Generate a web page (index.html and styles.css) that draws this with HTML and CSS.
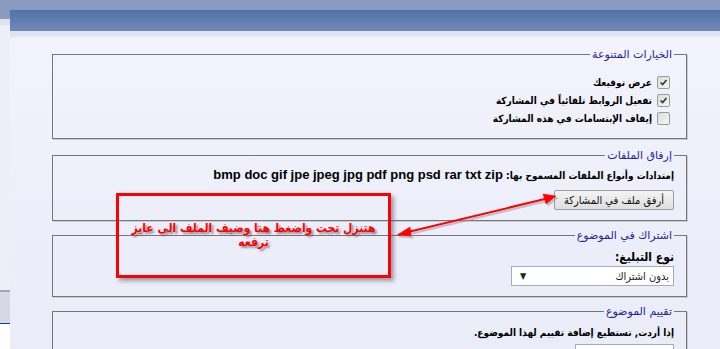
FILE: index.html
```html
<!DOCTYPE html>
<html lang="ar">
<head>
    <meta charset="UTF-8">
    <title>إرفاق الملفات</title>
    <link rel="stylesheet" href="styles.css">
</head>
<body>
    <div class="topbar"></div>
    <div class="frame">
        <div class="side">
            <div class="side-top"></div>
            <div class="side-band"></div>
            <div class="side-space"></div>
            <div class="side-block"></div>
        </div>
        <div class="main">
            <div class="header"></div>
            <div class="header-band"></div>
            <form class="options" dir="rtl">
                <fieldset class="box box-misc">
                    <legend>الخيارات المتنوعة</legend>
                    <label class="check-row"><span class="check on"><svg viewBox="0 0 13 13"><path d="M3 6.5 L5.5 9 L10 3.5" /></svg></span>عرض توقيعك</label>
                    <label class="check-row"><span class="check on"><svg viewBox="0 0 13 13"><path d="M3 6.5 L5.5 9 L10 3.5" /></svg></span>تفعيل الروابط تلقائياً في المشاركة</label>
                    <label class="check-row"><span class="check"></span>إيقاف الإبتسامات في هذه المشاركة</label>
                </fieldset>

                <fieldset class="box box-files">
                    <legend>إرفاق الملفات</legend>
                    <div class="file-types">إمتدادات وأنواع الملفات المسموح بها: <span class="ext">bmp doc gif jpe jpeg jpg pdf png psd rar txt zip</span></div>
                    <button type="button" class="attach-btn">أرفق ملف في المشاركة</button>
                </fieldset>

                <fieldset class="box box-sub">
                    <legend>اشتراك في الموضوع</legend>
                    <div class="field-label">نوع التبليغ:</div>
                    <div class="select wide"><span>بدون اشتراك</span><span class="arrow">&#9660;</span></div>
                </fieldset>

                <fieldset class="box box-rate">
                    <legend>تقييم الموضوع</legend>
                    <div class="rate-text">إذا أردت, تستطيع إضافة تقييم لهذا الموضوع.</div>
                    <div class="select narrow"><span>اختر التقييم</span></div>
                </fieldset>
            </form>
        </div>
    </div>

    <div class="note" dir="rtl">
        <p>هتنزل تحت واضغط هنا وضيف الملف الى عايز<br>ترفعه</p>
    </div>

    <svg class="pointer" width="170" height="60" viewBox="0 0 170 60">
        <g transform="translate(2 2)" fill="#9a9aa6" stroke="#9a9aa6" opacity="0.55">
            <line x1="10" y1="43" x2="155" y2="8" stroke-width="2" />
            <polygon points="3,45 16,37 17,46" />
            <polygon points="162,6 149,4 152,14" />
        </g>
        <g fill="#ff0000" stroke="#ff0000">
            <line x1="10" y1="43" x2="155" y2="8" stroke-width="2" />
            <polygon points="3,45 16,37 17,46" stroke-width="0.5" />
            <polygon points="162,6 149,4 152,14" stroke-width="0.5" />
        </g>
    </svg>
</body>
</html>
```

FILE: styles.css
```css
body, html {
    margin: 0;
    padding: 0;
    height: 100%;
    overflow: hidden;
}
body {
    background-color: #eff0fa;
    font-family: "DejaVu Sans Condensed", "DejaVu Sans", sans-serif;
    position: relative;
}
.topbar {
    height: 10px;
    background-color: #8a9bc2;
}
.frame {
    display: flex;
    height: 339px;
}
.side {
    width: 10px;
    display: flex;
    flex-direction: column;
    background-color: #ffffff;
}
.side-top {
    height: 9px;
    background-color: #8a9bc2;
}
.side-band {
    height: 6px;
    background-color: #dde2ee;
}
.side-space {
    height: 265px;
    background-color: #eceef8;
}
.side-block {
    height: 31px;
    border-top: 2px solid #a4a7b2;
    border-bottom: 1px solid #1d3596;
    background-color: #d6d9e3;
}
.main {
    flex-grow: 1;
    background: linear-gradient(#f3f4fc, #eceef9 60%, #eaecf8);
}
.header {
    height: 21px;
    background: linear-gradient(#5272a8, #7189b9);
}
.header-band {
    height: 5px;
    background-color: #dee3ef;
    border-bottom: 2px solid #eaecf3;
}
.options {
    padding: 10px 33px 0 42px;
}
.box {
    margin: 0 0 8px 0;
    border: 1px solid #767676;
    box-shadow: 1px 1px 0 #c9cad2;
    padding: 10px 12px 12px 12px;
    min-width: 0;
}
.box legend {
    color: #24249c;
    font-family: "DejaVu Sans", sans-serif;
    font-size: 11px;
    line-height: 13px;
    padding: 0 2px;
}
.box-misc {
    padding-top: 12px;
    padding-bottom: 11px;
    margin-bottom: 10px;
}
.check-row {
    display: flex;
    align-items: center;
    height: 18px;
    font-size: 10px;
    font-weight: bold;
    color: #000000;
}
.check {
    width: 11px;
    height: 11px;
    border: 1px solid #9c9c9c;
    border-radius: 2px;
    background: linear-gradient(135deg, #dcdcdc, #f6f6f6);
    margin: 0 4px 0 5px;
    display: flex;
}
.check svg {
    width: 11px;
    height: 11px;
}
.check path {
    fill: none;
    stroke: #3a3a3a;
    stroke-width: 2;
}
.box-files {
    padding-top: 5px;
    padding-bottom: 10px;
}
.file-types {
    font-size: 10px;
    font-weight: bold;
    line-height: 16px;
    color: #000000;
}
.ext {
    font-family: "Liberation Sans", Arial, sans-serif;
    font-size: 13px;
}
.attach-btn {
    display: block;
    margin-top: 6px;
    width: 120px;
    height: 20px;
    padding: 0;
    border: 1px solid #9d9d9d;
    border-radius: 2px;
    background: linear-gradient(#f4f4f4, #dedede);
    font-family: "DejaVu Sans Condensed", "DejaVu Sans", sans-serif;
    font-size: 11px;
    color: #111111;
}
.box-sub {
    padding-top: 7px;
    padding-bottom: 10px;
}
.field-label {
    font-size: 12px;
    font-weight: bold;
    line-height: 16px;
}
.select {
    display: flex;
    justify-content: space-between;
    align-items: center;
    height: 18px;
    margin-top: 1px;
    padding: 0 4px 0 8px;
    border: 1px solid #a6adb6;
    background-color: #ffffff;
    font-size: 11px;
    color: #222222;
}
.select.wide {
    width: 149px;
}
.select.narrow {
    width: 85px;
    margin-top: 3px;
}
.arrow {
    font-size: 9px;
}
.box-rate {
    padding-top: 7px;
}
.rate-text {
    font-size: 10px;
    font-weight: bold;
    line-height: 16px;
}
.note {
    position: absolute;
    left: 116px;
    top: 193px;
    width: 269px;
    height: 79px;
    border: 3px solid #ff0000;
    box-shadow: 3px 3px 4px rgba(90, 90, 110, 0.55);
}
.note p {
    margin: 25px 4px 0 4px;
    text-align: center;
    color: #ff0000;
    font-size: 12px;
    font-weight: bold;
    line-height: 14px;
    text-shadow: 2px 2px 2px rgba(80, 80, 90, 0.6);
}
.pointer {
    position: absolute;
    left: 394px;
    top: 190px;
}
```
